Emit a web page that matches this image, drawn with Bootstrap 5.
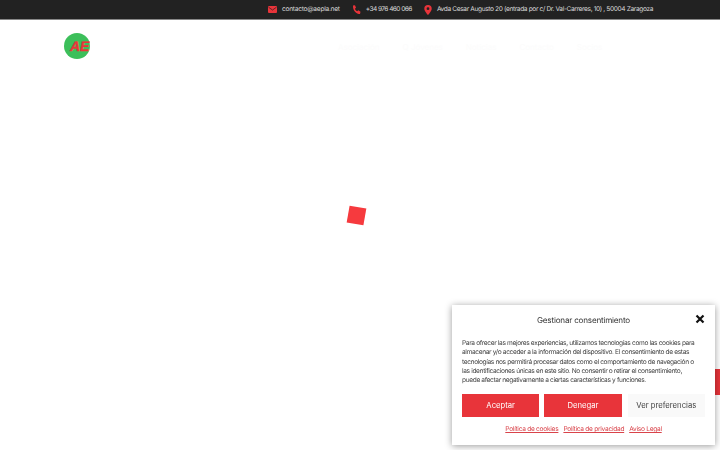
<!DOCTYPE html>
<html lang="es">
<head>
    <meta charset="UTF-8">
    <meta name="viewport" content="width=device-width, initial-scale=1.0">
    <title>AEPLA</title>
    <link href="https://cdn.jsdelivr.net/npm/bootstrap@5.3.0/dist/css/bootstrap.min.css" rel="stylesheet">
    <style>
        html, body { height: 450px; overflow: hidden; }
        body { font-family: Inter, "Liberation Sans", sans-serif; background: #fff; text-rendering: geometricPrecision; }
        .top-strip {
            height: 20px;
            background: #222;
            border-bottom: 1px solid #888;
            color: #d8d8d8;
            font-size: 6.6px;
            letter-spacing: -.37px;
            padding-right: 67px;
            padding-top: 1px;
            gap: 12px;
        }
        .top-strip svg { display: block; }
        .top-item { gap: 5px; }
        .top-mail { letter-spacing: -.26px; }
        .top-phone { letter-spacing: -.57px; }
        .main-head { height: 52px; padding-left: 64px; padding-top: 13px; }
        .site-logo { width: 26px; height: 26px; }
        .main-menu { gap: 23px; margin-left: 248px; padding-top: 8px; color: #fcfcfc; font-size: 8px; }
        .loader-square {
            position: absolute; left: 348px; top: 207px;
            width: 17px; height: 17px;
            background: #f63a3e;
            transform: rotate(10deg);
        }
        .side-tab {
            position: fixed; right: 0; top: 369px;
            width: 6px; height: 26px;
            background: #e8343a;
        }
        .consent-box {
            position: fixed; left: 452px; top: 305px;
            width: 263px; height: 140px;
            padding: 9px 10px 0;
            background: #fff;
            box-shadow: 0 1px 7px rgba(0,0,0,.4);
            color: #333;
        }
        .consent-title { font-size: 8.1px; line-height: 12px; letter-spacing: -.2px; }
        .consent-close {
            position: absolute; right: 10px; top: 9px;
            width: 10px; height: 10px;
        }
        .consent-text { font-size: 6.6px; line-height: 9.3px; margin: 13px 0 9px; padding-right: 6px; color: #444; letter-spacing: -.36px; }
        .consent-btns { gap: 5px; }
        .consent-btn {
            height: 23px; padding: 0; border: 0; border-radius: 0;
            font-size: 7.7px;
            background: #e8343a; color: #fff;
        }
        .consent-btn:hover { background: #e8343a; color: #fff; }
        .btn-accept { width: 78px; }
        .btn-deny { width: 78px; }
        .btn-prefs { width: 78px; margin-left: 1px; background: #f9f9f9; color: #444; }
        .btn-prefs:hover { background: #f9f9f9; color: #444; }
        .consent-links { gap: 5px; margin-top: 6px; font-size: 6.6px; line-height: 12px; letter-spacing: -.28px; }
        .consent-links a { color: #d9434a; }
    </style>
</head>
<body>
    <div class="top-strip d-flex justify-content-end align-items-center">
        <div class="top-item top-mail d-flex align-items-center">
            <svg width="9" height="7" viewBox="0 0 9 7"><rect width="9" height="7" rx="1" fill="#e8343a"/><path d="M.5 1.2 4.5 4l4-2.8" fill="none" stroke="#222" stroke-width=".7"/></svg>
            <span>contacto@aepla.net</span>
        </div>
        <div class="top-item top-phone d-flex align-items-center">
            <svg width="9" height="10" viewBox="0 0 9 10"><path d="M1 .5 3 .2l1 2.6-1.100 1c.4 1.200 1.200 2 2.300 2.500l1.100-1 2.200 1.500-.5 2.300C4.500 9 .6 5.500 1 .5z" fill="#e8343a"/></svg>
            <span>+34 976 460 066</span>
        </div>
        <div class="top-item d-flex align-items-center">
            <svg width="8" height="10" viewBox="0 0 8 10"><path fill-rule="evenodd" d="M4 0a3.700 3.700 0 0 1 3.700 3.700C7.700 6 4 10 4 10S.3 6 .3 3.700A3.700 3.700 0 0 1 4 0zm0 2.300a1.400 1.400 0 1 0 0 2.800 1.400 1.400 0 0 0 0-2.800z" fill="#e8343a"/></svg>
            <span>Avda Cesar Augusto 20 (entrada por c/ Dr. Val-Carreres, 10) , 50004 Zaragoza</span>
        </div>
    </div>

    <header class="main-head d-flex">
        <svg class="site-logo" viewBox="0 0 26 26">
            <circle cx="13" cy="13" r="13" fill="#3cbf5a"/>
            <text x="6" y="18" font-family="Liberation Sans, sans-serif" font-size="14" font-weight="700" font-style="italic" fill="#e8343a" stroke="#e8343a" stroke-width=".4">AE</text>
        </svg>
        <nav class="main-menu d-flex">
            <span>Asociación</span>
            <span>Q Jóvenes</span>
            <span>Noticias</span>
            <span>Contacto</span>
            <span>Socios</span>
        </nav>
    </header>

    <div class="loader-square"></div>
    <div class="side-tab"></div>

    <div class="consent-box">
        <div class="consent-title text-center">Gestionar consentimiento</div>
        <svg class="consent-close" viewBox="0 0 10 10"><path d="M1.500 1.500l7 7m0-7l-7 7" stroke="#111" stroke-width="2.200" fill="none"/></svg>
        <p class="consent-text">Para ofrecer las mejores experiencias, utilizamos tecnologías como las cookies para almacenar y/o acceder a la información del dispositivo. El consentimiento de estas tecnologías nos permitirá procesar datos como el comportamiento de navegación o las identificaciones únicas en este sitio. No consentir o retirar el consentimiento, puede afectar negativamente a ciertas características y funciones.</p>
        <div class="consent-btns d-flex">
            <button class="btn consent-btn btn-accept">Aceptar</button>
            <button class="btn consent-btn btn-deny">Denegar</button>
            <button class="btn consent-btn btn-prefs">Ver preferencias</button>
        </div>
        <div class="consent-links d-flex justify-content-center">
            <a href="#">Política de cookies</a>
            <a href="#">Política de privacidad</a>
            <a href="#">Aviso Legal</a>
        </div>
    </div>
    <script src="https://cdn.jsdelivr.net/npm/bootstrap@5.3.0/dist/js/bootstrap.bundle.min.js"></script>
</body>
</html>
